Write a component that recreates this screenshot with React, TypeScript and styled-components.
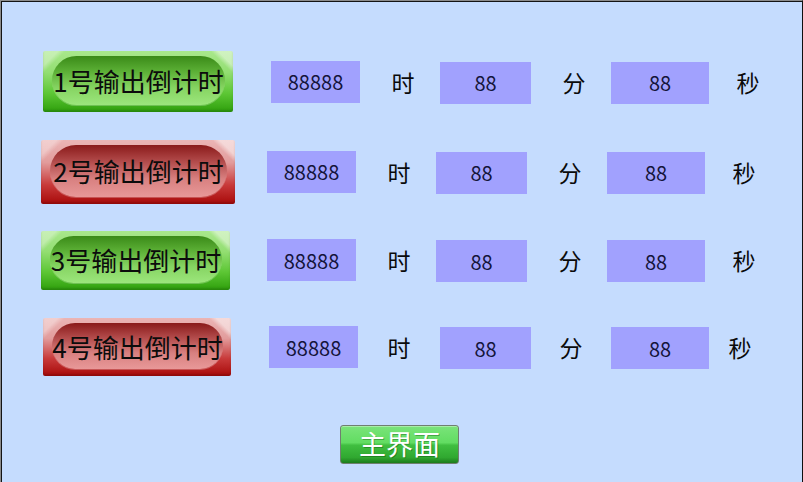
import React from "react";
import styled, { createGlobalStyle, css } from "styled-components";

const Global = createGlobalStyle`
  html, body { margin: 0; padding: 0; }
  body { font-family: "Noto Sans CJK SC", "Noto Sans", sans-serif; background: #c5dcfe; }
`;

const Frame = styled.div`
  box-sizing: border-box;
  width: 803px;
  height: 482px;
  background: #c5dcfe;
  border-top: 1px solid #8c8c8c;
  border-left: 1px solid #8c8c8c;
  border-right: 1px solid #101010;
  box-shadow: inset 1px 1px 0 #141414;
  padding-top: 35px;
  display: flex;
  flex-direction: column;
  overflow: hidden;
`;

const Row = styled.div<{ $left: number; $gap: number; $h: number }>`
  height: ${(p) => p.$h}px;
  display: flex;
  align-items: center;
  padding-left: ${(p) => p.$left}px;
  & > :first-child { margin-right: ${(p) => p.$gap}px; }
`;

const green = css`
  background:
    linear-gradient(135deg, rgba(255,255,255,0.35) 0 6%, transparent 9%),
    linear-gradient(225deg, rgba(255,255,255,0.45) 0 6%, transparent 9%),
    linear-gradient(to bottom, #a9e88c 0%, #93de72 35%, #5cc634 70%, #2e9f0c 100%);
`;
const red = css`
  background:
    linear-gradient(135deg, rgba(255,255,255,0.35) 0 6%, transparent 9%),
    linear-gradient(225deg, rgba(255,255,255,0.5) 0 6%, transparent 9%),
    linear-gradient(to bottom, #ebb5b5 0%, #e29c9c 35%, #c83a3a 70%, #a80a0a 100%);
`;

const OutputButton = styled.button<{ $on: boolean; $w: number; $h: number }>`
  box-sizing: border-box;
  width: ${(p) => p.$w}px;
  height: ${(p) => p.$h}px;
  border: none;
  border-radius: 2px;
  padding: 5px 8px 7px 9px;
  display: flex;
  align-items: stretch;
  cursor: pointer;
  ${(p) => (p.$on ? green : red)}
  box-shadow: inset 0 -2px 2px rgba(0,0,0,0.15);
`;

const Pill = styled.span<{ $on: boolean }>`
  flex: 1;
  border-radius: 999px;
  display: flex;
  align-items: center;
  justify-content: center;
  font-family: "Noto Sans CJK SC", "Noto Sans", sans-serif;
  font-size: 26px;
  color: #0c0c0c;
  white-space: nowrap;
  background: ${(p) =>
    p.$on
      ? "linear-gradient(to bottom, #3a8a18 0%, #5aae34 30%, #86d462 65%, #9ce67c 100%)"
      : "linear-gradient(to bottom, #8a1a1a 0%, #b04848 30%, #d88080 65%, #e89898 100%)"};
  box-shadow: 0 1px 0 rgba(255,255,255,0.25);
`;

const ValueBox = styled.div<{ $w: number; $dy?: number }>`
  box-sizing: border-box;
  width: ${(p) => p.$w}px;
  height: 42px;
  background: #a1a1fe;
  display: flex;
  align-items: center;
  justify-content: center;
  font-family: "Noto Sans CJK SC", "Noto Sans", sans-serif;
  font-size: 20px;
  color: #14143a;
  position: relative;
  top: ${(p) => p.$dy ?? 0}px;
`;

const Unit = styled.span<{ $w: number; $shift: number }>`
  width: ${(p) => p.$w}px;
  box-sizing: border-box;
  padding-left: ${(p) => p.$shift}px;
  text-align: center;
  font-family: "Noto Sans CJK SC", sans-serif;
  font-size: 23px;
  color: #0a0a0a;
`;

const Footer = styled.div`
  display: flex;
  justify-content: center;
  padding-top: 35px;
`;

const MainButton = styled.button`
  box-sizing: border-box;
  width: 119px;
  height: 39px;
  margin-right: 4px;
  border: 1px solid #6f7f6f;
  border-radius: 3px;
  padding: 0 0 2px;
  background: linear-gradient(
    to bottom,
    #7ae47a 0%,
    #62dc62 45%,
    #40be40 52%,
    #30a830 85%,
    #1c7c1c 100%
  );
  box-shadow: inset 0 1px 0 rgba(255,255,255,0.35);
  color: #ffffff;
  font-family: "Noto Sans CJK SC", sans-serif;
  font-size: 27px;
  line-height: 1;
  text-shadow: 1px 1px 0 rgba(0,60,0,0.35);
  cursor: pointer;
`;

type UnitSpec = { w: number; shift: number };

type RowSpec = {
  n: number;
  on: boolean;
  left: number;
  bw: number;
  bh: number;
  gap: number;
  h: number;
  units: [UnitSpec, UnitSpec, UnitSpec];
};

const std: [UnitSpec, UnitSpec, UnitSpec] = [
  { w: 80, shift: 6 },
  { w: 80, shift: 6 },
  { w: 72, shift: 6 },
];

const rows: RowSpec[] = [
  { n: 1, on: true, left: 42, bw: 190, bh: 61, gap: 38, h: 91, units: std },
  { n: 2, on: false, left: 40, bw: 194, bh: 64, gap: 32, h: 89, units: std },
  { n: 3, on: true, left: 40, bw: 189, bh: 59, gap: 37, h: 88, units: std },
  {
    n: 4,
    on: false,
    left: 42,
    bw: 188,
    bh: 58,
    gap: 38,
    h: 86,
    units: [
      { w: 82, shift: 0 },
      { w: 80, shift: 0 },
      { w: 62, shift: 0 },
    ],
  },
];

export default function App() {
  return (
    <>
      <Global />
      <Frame>
        {rows.map((r) => (
          <Row key={r.n} $left={r.left} $gap={r.gap} $h={r.h}>
            <OutputButton $on={r.on} $w={r.bw} $h={r.bh}>
              <Pill $on={r.on}>{r.n}号输出倒计时</Pill>
            </OutputButton>
            <ValueBox $w={89}>88888</ValueBox>
            <Unit $w={r.units[0].w} $shift={r.units[0].shift}>时</Unit>
            <ValueBox $w={91} $dy={1}>88</ValueBox>
            <Unit $w={r.units[1].w} $shift={r.units[1].shift}>分</Unit>
            <ValueBox $w={98} $dy={1}>88</ValueBox>
            <Unit $w={r.units[2].w} $shift={r.units[2].shift}>秒</Unit>
          </Row>
        ))}
        <Footer>
          <MainButton>主界面</MainButton>
        </Footer>
      </Frame>
    </>
  );
}
